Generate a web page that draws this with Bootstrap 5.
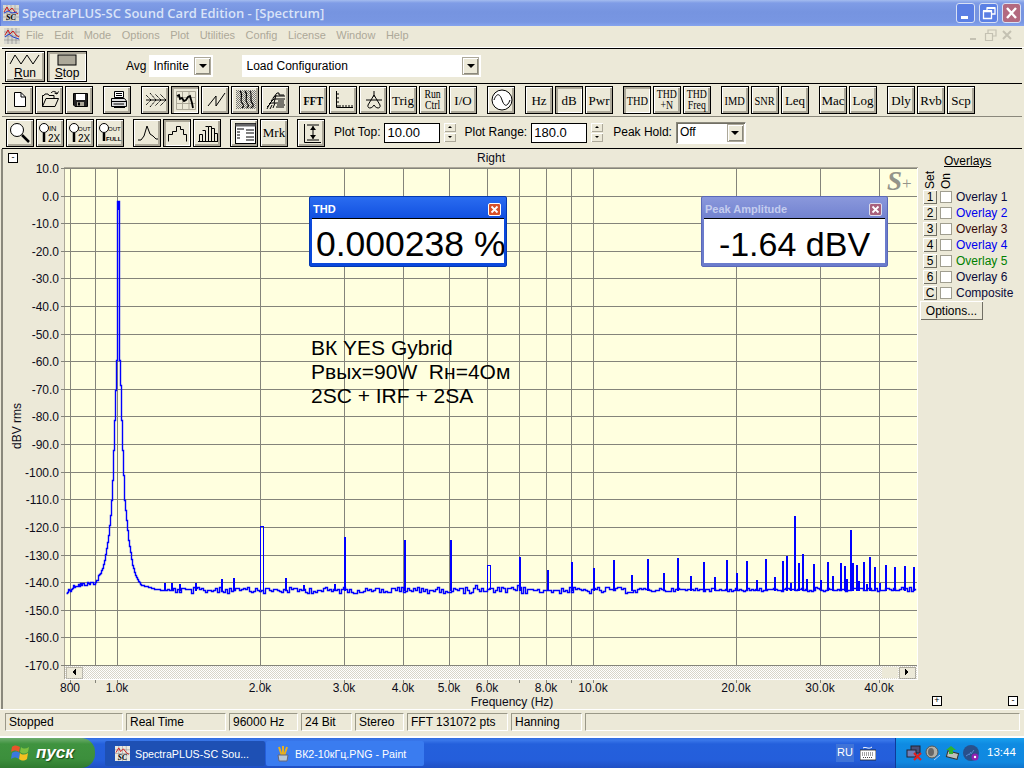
<!DOCTYPE html>
<html lang="en">
<head>
<meta charset="utf-8">
<title>SpectraPLUS-SC</title>
<link href="https://cdn.jsdelivr.net/npm/bootstrap@5.3.0/dist/css/bootstrap.min.css" rel="stylesheet">
<style>
html,body{margin:0;width:1024px;height:768px;overflow:hidden;background:#ece9d8}
body{font:12px/1.2 "Liberation Sans",Arial,sans-serif;color:#000}
.app-shell{width:1024px;height:768px}
.ti-bar{height:26px;padding:0 3px 0 2px;background:linear-gradient(#a4bcef 0,#7f9ce6 3px,#7694e0 12px,#7896e2 22px,#86a4ee 26px);color:#d9e3f8;border-left:1px solid #5f7cdc}
.ti-name{font:600 13px "Open Sans",sans-serif;margin-left:3px}
.ti-ctl{width:19px;height:20px;border-radius:3px;border:1px solid #d8e0f4;background:#5b7fe4}
.ti-close{background:#b3697f}
.ti-ctl svg,.mdi-ctl svg{display:block}
.menu-row{height:22px;padding:0 4px 2px;border-bottom:1px solid #fff}
.menu-row span.mi{color:#aca899;margin-right:10.500px;font-size:11px}
.menu-row span.first-mi{margin-left:2px}
.mdi-ctl{width:17px;height:17px}
.t-row{margin:0 2px;border-top:1px solid #000;background:#ece9d8}
.t-one{height:35px;padding-left:3px}
.t-two{height:33px;padding-left:3px;gap:10px}
.t-three{height:33px;padding-left:4px;border-bottom:1px solid #000;border-top-color:#8a887c}
.grp{display:flex;gap:2px}
.x-btn{width:28px;height:28px;padding:0;border:1px solid #000;border-radius:0;background:#ece9d8;box-shadow:inset 1px 1px 0 #fff,inset -2px -2px 0 #aca899;font:13px/11px "Liberation Serif",serif;color:#000;display:flex;align-items:center;justify-content:center;text-align:center;flex:none}
.x-btn.on{box-shadow:inset 2px 2px 0 #aca899,inset -1px -1px 0 #fff;background:#ece9d8}
.x-btn svg{display:block}
.big-btn{width:40px;height:31px;flex-direction:column;font:12px/12px "Liberation Sans",sans-serif;gap:1px}
.x-lbl{white-space:nowrap;display:inline-block}
.sq-lbl{transform:scaleX(.8)}
.two-lbl{font-size:11.500px;transform:scaleX(.85);line-height:11px}
.combo{height:22px;background:#fff;border:1px solid #fff;padding-left:3px}
.combo-btn{width:17px;height:18px;margin:1px;background:#ece9d8;border:1px solid #aca899;box-shadow:inset 1px 1px 0 #fff,inset -1px -1px 0 #8a887c;display:flex;align-items:center;justify-content:center}
.tri{width:0;height:0;border-left:4px solid transparent;border-right:4px solid transparent;border-top:4px solid #000}
.sunk{border:1px solid #8a887c;border-bottom-color:#fff;border-right-color:#fff;box-shadow:inset 1px 1px 0 #716f64;background:#fff}
.num-in{width:56px;height:20px;padding:0 2px;border:1px solid #000;border-radius:0;font:13px "Liberation Sans",sans-serif;background:#fff;color:#000}
.spin{width:12px;height:20px;flex:none}
.spin i{display:block;height:9px;margin-bottom:1px;background:#ece9d8;box-shadow:inset 1px 1px 0 #fff,inset -1px -1px 0 #aca899;position:relative}
.spin i::after{content:"";position:absolute;left:4px;top:3px;border-left:2px solid transparent;border-right:2px solid transparent}
.spin i.up::after{border-bottom:2px solid #000}
.spin i.dn::after{border-top:2px solid #000}
.main-area{height:560px}
.plot-wrap{width:918px;height:560px;flex:none}
.plot-wrap svg{display:block}
.ax{font:12px "Liberation Sans",sans-serif;fill:#0c0c18}
.note{font:21px "Liberation Sans",sans-serif;fill:#000}
.float-win{top:47px;height:71px;border-radius:2px}
.fw-a{left:309px;width:198px;background:linear-gradient(#2a6cf0,#0a48dc 40%,#0a48dc);border:1px solid #0438b0}
.fw-b{left:701px;width:187px;background:linear-gradient(#8a98dc,#6b7ccc 40%,#6b7ccc);border:1px solid #5a68b8}
.fw-head{height:21px;padding:3px 4px 0 3px;font:700 11px "Liberation Sans",sans-serif;color:#fff}
.fw-b .fw-head{color:#c4ccee}
.fw-x{width:13px;height:13px;border:1px solid #fff;border-radius:2px;background:#d85028;margin-right:1px}
.fw-b .fw-x{background:#a8607c;border-color:#dde}
.fw-body{margin:0 2px;height:45px;background:#fff;border-top:1px solid #000;color:#000;white-space:nowrap;overflow:hidden}
.fw-a .fw-body{padding-left:4px;font:35.500px/51px "Liberation Sans",sans-serif}
.fw-b .fw-body{text-align:center;font:34px/51px "Liberation Sans",sans-serif}
.side-panel{width:106px;height:560px}
.ov-title{margin:6px 0 0 26px;line-height:13px;height:13px;text-decoration:underline}
.rot-row{height:21px;padding-left:6px;gap:3px}
.rot{writing-mode:vertical-rl;transform:rotate(180deg);height:21px;line-height:13px;width:13px;text-align:left}
.ov-row{height:16px;padding-left:5px}
.ov-num{width:14px;height:14px;padding:0;border:0;border-radius:0;background:#ece9d8;box-shadow:inset 1px 1px 0 #fff,inset -1px -1px 0 #716f64;font:12px/13px "Liberation Sans",sans-serif;color:#000}
.ov-chk{width:12px;height:12px;margin:0 4px 0 3px;border-radius:0!important;border:1px solid #a09e90;background-color:#fff;box-shadow:none}
.c-blue{color:#0000f0}.c-green{color:#008000}.c-navy{color:#0a0a38}.c-maroon{color:#380808}
.opt-btn{width:63px;height:19px;margin:0 0 0 2px;padding:0;border:0;border-radius:0;background:#ece9d8;box-shadow:inset 1px 1px 0 #fff,inset -1px -1px 0 #716f64;font:12px/18px "Liberation Sans",sans-serif;color:#000}
.box-sq{width:10px;height:10px;border:1px solid #000;background:#fff;font:9px/7px "Liberation Sans",sans-serif;text-align:center;display:block;flex:none}
.side-foot{padding:0 6px 3px 14px}
.left-sq{left:8px;top:4px}
.stat-row{height:29px;border-top:1px solid #fff;border-bottom:2px solid #fff;padding:3px 4px 5px 5px;gap:3px}
.pane{height:18px;border-left:1px solid #9a9888;border-top:1px solid #9a9888;border-right:1px solid #fff;border-bottom:1px solid #fff;padding-left:3px;line-height:16px;white-space:nowrap;flex:none}
.task-row{height:30px;background:linear-gradient(#2f6be0 0,#3a78ea 2px,#2460dc 6px,#245edb 22px,#1f4fc4 30px);color:#fff}
.go-btn{width:95px;height:30px;border-radius:0 14px 14px 0;background:linear-gradient(#6fae6f,#3f933f 20%,#3c8f3c 70%,#2f7a2f);font:italic 700 17px "Liberation Sans",sans-serif;color:#fff;padding-left:11px;gap:6px;text-shadow:1px 1px 1px #1a4a1a}
.task-btn{height:25px;margin-top:3px;padding-left:10px;border-radius:2px;font:10.700px "Liberation Sans",sans-serif;gap:5px;white-space:nowrap;flex:none}
.tb-one{width:160px;margin-left:10px;background:#1e50b4}
.tb-two{width:158px;margin-left:1px;background:#3a7cf0}
.lang-box{background:#3f73d8;padding:2px 1px;margin-right:6px;font-size:11px}
.tray-box{width:129px;height:30px;background:linear-gradient(#18a0ee,#0f8be2 6px,#1088e0 24px,#0f74cc);border-left:1px solid #0e3a9a;padding-left:10px;margin-left:19px;gap:3px}
.clock{margin-left:5px;font-size:11.500px}
</style>
</head>
<body>
<div class="app-shell d-flex flex-column">

<div class="ti-bar d-flex align-items-center">
  <svg width="16" height="16" viewBox="0 0 16 16"><rect width="16" height="16" fill="#d8d8d0"/><path d="M0 4H16M0 8H16M0 12H16M4 0V16M8 0V16M12 0V16" stroke="#888" stroke-width=".5"/><path d="M1 7L4 2 6 6 9 3 12 7 15 9" stroke="#d01818" fill="none"/><path d="M1 8L5 6 9 8 14 7" stroke="#2040d0" fill="none"/><text x="3" y="15" font-family="Liberation Serif" font-size="8" font-weight="700" font-style="italic">SC</text></svg>
  <span class="ti-name">SpectraPLUS-SC Sound Card Edition - [Spectrum]</span>
  <div class="ms-auto d-flex gap-1">
    <div class="ti-ctl"><svg width="17" height="18"><rect x="4" y="12" width="7" height="3" fill="#fff"/></svg></div>
    <div class="ti-ctl"><svg width="17" height="18"><path d="M7 7V4H15V10H12M3.500 7.500H11.500V14.500H3.500Z" fill="none" stroke="#fff" stroke-width="1.300"/><path d="M3 7H12M7 4H15" stroke="#fff" stroke-width="2"/></svg></div>
    <div class="ti-ctl ti-close"><svg width="17" height="18"><path d="M4 4L13 14M13 4L4 14" stroke="#fff" stroke-width="2.400"/></svg></div>
  </div>
</div>

<div class="menu-row d-flex align-items-center">
  <svg class="me-1" width="16" height="16" viewBox="0 0 16 16"><rect width="16" height="16" fill="#d8d8d0"/><path d="M0 4H16M0 8H16M0 12H16M4 0V16M8 0V16M12 0V16" stroke="#777" stroke-width=".5"/><path d="M1 7L4 2 6 6 9 3 12 7 15 9" stroke="#d01818" fill="none"/><path d="M1 9L5 6 9 9 15 11" stroke="#2040d0" fill="none"/></svg>
  <span class="mi first-mi">File</span><span class="mi">Edit</span><span class="mi">Mode</span><span class="mi">Options</span><span class="mi">Plot</span><span class="mi">Utilities</span><span class="mi">Config</span><span class="mi">License</span><span class="mi">Window</span><span class="mi">Help</span>
  <div class="ms-auto d-flex me-1">
    <svg class="mdi-ctl" viewBox="0 0 17 17"><path d="M5 12H11" stroke="#c4c1b2" stroke-width="2"/></svg>
    <svg class="mdi-ctl" viewBox="0 0 17 17"><path d="M6 6V3H14V9H11M3.500 6.500H10.500V13.500H3.500Z" fill="none" stroke="#c4c1b2" stroke-width="1.200"/></svg>
    <svg class="mdi-ctl" viewBox="0 0 17 17"><path d="M4 4L12 12M12 4L4 12" stroke="#c4c1b2" stroke-width="2"/></svg>
  </div>
</div>

<div class="t-row t-one d-flex align-items-center">
  <button class="btn x-btn big-btn"><svg width="32" height="13" viewBox="0 0 32 13"><path d="M1 11L6 2 12 11 18 2 24 11 30 2" fill="none" stroke="#000"/></svg><span class="x-lbl"><u>R</u>un</span></button>
  <button class="btn x-btn big-btn on" style="margin-left:2px"><svg width="20" height="12" viewBox="0 0 20 12"><rect x="1" y="1" width="18" height="10" fill="#aca899" stroke="#000"/></svg><span class="x-lbl"><u>S</u>top</span></button>
  <span style="margin-left:39px">Avg</span>
  <div class="combo d-flex align-items-center" style="width:64px;margin-left:3px"><span class="flex-grow-1">Infinite</span><span class="combo-btn"><i class="tri"></i></span></div>
  <div class="combo d-flex align-items-center" style="width:239px;margin-left:29px"><span class="flex-grow-1">Load Configuration</span><span class="combo-btn"><i class="tri"></i></span></div>
</div>

<div class="t-row t-two d-flex align-items-center">
  <div class="grp">
    <button class="btn x-btn"><svg width="28" height="28"><path d="M8.500 6.500H15L19.500 11V20.500H8.500Z" fill="#fff" stroke="#000"/><path d="M15 6.500V11H19.500" fill="none" stroke="#000"/></svg></button>
    <button class="btn x-btn"><svg width="28" height="28"><path d="M6.500 20.500V9.500H8L9 8H12L13 9.500H18V12.500M6.500 20.500H19L22.500 12.500H10L6.500 20.500Z" fill="#ece9d8" stroke="#000"/><path d="M15 7C17 4.500 20 5 21 8M21 8L22.500 5.500M21 8L18.500 7" fill="none" stroke="#000"/></svg></button>
    <button class="btn x-btn"><svg width="28" height="28"><path d="M7.500 7.500H21.500V20.500H9L7.500 19Z" fill="#222" stroke="#000"/><rect x="10" y="8" width="9" height="6" fill="#fff"/><rect x="11" y="16" width="7" height="4" fill="#aca899"/><rect x="12" y="16.500" width="2" height="3" fill="#000"/></svg></button>
  </div>
  <div class="grp">
    <button class="btn x-btn"><svg width="28" height="28"><path d="M10.500 5.500H19.500V11.500H10.500Z" fill="#fff" stroke="#000"/><path d="M7.500 12.500H20.500L22.500 15V20.500H7.500Z" fill="#ddd" stroke="#000"/><path d="M7.500 15.500H22.500M9.500 18H20M10 21.500H21" stroke="#000"/><path d="M12 7.500H18M12 9.500H18" stroke="#000"/></svg></button>
  </div>
  <div class="grp">
    <button class="btn x-btn"><svg width="28" height="28"><path d="M4 14H24" stroke="#000"/><path d="M24 14L18 8M24 14L18 20M19 14L13 8M19 14L13 20M14 14L8 7M14 14L8 21M9 14L4 9M9 14L4 19" stroke="#000" fill="none" stroke-dasharray="1.400 .6"/></svg></button>
    <button class="btn x-btn on"><svg width="28" height="28"><path d="M4.500 5.500H23.500V23.500H4.500ZM4.500 11.500H23.500M4.500 17.500H23.500M10.500 5.500V23.500M17 5.500V23.500" fill="none" stroke="#aca899"/><path d="M5 10L7 9 8 13 10 12 12 15 14 14 16 11 18 10 20 17 21 22" fill="none" stroke="#000" stroke-width="1.800"/></svg></button>
    <button class="btn x-btn"><svg width="28" height="28"><path d="M6 20L14 10V20L23 7" fill="none" stroke="#000"/></svg></button>
    <button class="btn x-btn"><svg width="28" height="28"><defs><pattern id="dots" width="2" height="2" patternUnits="userSpaceOnUse"><rect width="1" height="1" fill="#777"/><rect x="1" y="1" width="1" height="1" fill="#777"/></pattern></defs><rect x="4" y="4" width="20" height="19" fill="url(#dots)"/><path d="M8 5C12 9 7 13 10 17S11 20 10 22M13 5C17 9 12 13 15 17S16 20 15 22M18 5C21 9 17 13 20 17S20 20 19 22" fill="none" stroke="#000" stroke-width="1.200"/></svg></button>
    <button class="btn x-btn"><svg width="28" height="28"><path d="M5 21L9 17H22M7 18L12 13H23M9 15L13 10H23M11 12L15 7H17V9H22" fill="none" stroke="#000"/><path d="M5 23L7 19M8 23L10 19M11 22L13 17M14 21H22M15 19H23M12 17L14 9M16 15H22" stroke="#000"/></svg></button>
  </div>
  <div class="grp">
    <button class="btn x-btn"><b class="x-lbl sq-lbl">FFT</b></button>
    <button class="btn x-btn"><svg width="28" height="28"><path d="M6.500 5V21.500H23M6.500 8H9M6.500 12H9M6.500 16H9M6.500 20H9M10 19V21M13 19V21M16 19V21M19 19V21M22 19V21" fill="none" stroke="#000"/></svg></button>
    <button class="btn x-btn"><svg width="28" height="28"><path d="M14 5V11M6 14H22M14 9L8 19C7 23 12 23 14 19 16 23 21 23 20 19L14 9" fill="none" stroke="#000"/></svg></button>
    <button class="btn x-btn"><span class="x-lbl">Trig</span></button>
    <button class="btn x-btn"><span class="x-lbl two-lbl">Run<br>Ctrl</span></button>
    <button class="btn x-btn"><span class="x-lbl">I/O</span></button>
  </div>
  <div class="grp">
    <button class="btn x-btn"><svg width="28" height="28"><circle cx="14" cy="14" r="10" fill="#fff" stroke="#000"/><path d="M6 14C9 6 12 8 14 14S19 22 22 14" fill="none" stroke="#000"/></svg></button>
  </div>
  <div class="grp">
    <button class="btn x-btn"><span class="x-lbl">Hz</span></button>
    <button class="btn x-btn on"><span class="x-lbl">dB</span></button>
    <button class="btn x-btn"><span class="x-lbl">Pwr</span></button>
  </div>
  <div class="grp">
    <button class="btn x-btn on"><span class="x-lbl sq-lbl">THD</span></button>
    <button class="btn x-btn"><span class="x-lbl two-lbl">THD<br>+N</span></button>
    <button class="btn x-btn"><span class="x-lbl two-lbl">THD<br>Freq</span></button>
  </div>
  <div class="grp">
    <button class="btn x-btn"><span class="x-lbl sq-lbl">IMD</span></button>
    <button class="btn x-btn"><span class="x-lbl sq-lbl">SNR</span></button>
    <button class="btn x-btn"><span class="x-lbl">Leq</span></button>
  </div>
  <div class="grp">
    <button class="btn x-btn"><span class="x-lbl">Mac</span></button>
    <button class="btn x-btn"><span class="x-lbl">Log</span></button>
  </div>
  <div class="grp">
    <button class="btn x-btn"><span class="x-lbl">Dly</span></button>
    <button class="btn x-btn"><span class="x-lbl">Rvb</span></button>
    <button class="btn x-btn"><span class="x-lbl">Scp</span></button>
  </div>
</div>

<div class="t-row t-three d-flex align-items-center">
  <div class="grp">
    <button class="btn x-btn"><svg width="26" height="26"><circle cx="10" cy="10" r="6.500" fill="#fff" stroke="#000"/><path d="M15 15L22 22" stroke="#000" stroke-width="2.500"/></svg></button>
    <button class="btn x-btn"><svg width="26" height="26"><circle cx="7" cy="8" r="4.500" fill="#fff" stroke="#000"/><path d="M7 13V22" stroke="#000" stroke-width="2.500"/><text x="12" y="11" font-family="Liberation Sans" font-size="7.500">IN</text><text x="11" y="22" font-family="Liberation Sans" font-size="10">2X</text></svg></button>
    <button class="btn x-btn"><svg width="26" height="26"><circle cx="7" cy="8" r="4.500" fill="#fff" stroke="#000"/><path d="M7 13V22" stroke="#000" stroke-width="2.500"/><text x="11" y="11" font-family="Liberation Sans" font-size="6">OUT</text><text x="11" y="22" font-family="Liberation Sans" font-size="10">2X</text></svg></button>
    <button class="btn x-btn"><svg width="26" height="26"><circle cx="7" cy="8" r="4.500" fill="#fff" stroke="#000"/><path d="M7 13V21" stroke="#000" stroke-width="2.500"/><text x="11" y="11" font-family="Liberation Sans" font-size="6">OUT</text><text x="9" y="21" font-family="Liberation Sans" font-size="6" font-weight="700">FULL</text></svg></button>
  </div>
  <div class="grp" style="margin-left:9px">
    <button class="btn x-btn"><svg width="28" height="28"><path d="M4 21H7L10 17 13 7 16 15 19 17 22 20H24" fill="none" stroke="#000"/></svg></button>
    <button class="btn x-btn on"><svg width="28" height="28"><path d="M4.500 22.500V15.500H8.500V12.500H12.500V7.500H16.500V10.500H19.500V15.500H22.500V22.500" fill="none" stroke="#000"/></svg></button>
    <button class="btn x-btn"><svg width="28" height="28"><path d="M5.500 22.500V15.500H8.500V22.500M8.500 11.500H11.500V22.500M11.500 7.500H14.500V22.500M14.500 7.500H17.500V22.500M17.500 9.500H20.500V22.500M20.500 14.500H23.500V22.500M4 22.500H24" fill="none" stroke="#000"/></svg></button>
  </div>
  <div class="grp" style="margin-left:9px">
    <button class="btn x-btn"><svg width="28" height="28"><rect x="4.500" y="4.500" width="20" height="20" fill="#fff" stroke="#000"/><rect x="4.500" y="4.500" width="20" height="3" fill="#666"/><path d="M6 10H13M6 13H9M6 19H9M15 11H23M15 14H23M15 18H23M15 21H23M6 16H9" stroke="#000"/></svg></button>
    <button class="btn x-btn"><span class="x-lbl">Mrk</span></button>
  </div>
  <div class="grp" style="margin-left:9px">
    <button class="btn x-btn"><svg width="28" height="28"><path d="M6.500 5V23.500H23M9 6H21M9 21H21M15 7V20" fill="none" stroke="#000"/><path d="M15 7L12 11H18ZM15 20L12 16H18Z" fill="#000"/></svg></button>
  </div>
  <span style="margin-left:9px">Plot Top:</span>
  <input class="form-control num-in ms-1" value="10.00">
  <div class="spin ms-1"><i class="up"></i><i class="dn"></i></div>
  <span style="margin-left:8px">Plot Range:</span>
  <input class="form-control num-in ms-1" value="180.0">
  <div class="spin ms-1"><i class="up"></i><i class="dn"></i></div>
  <span style="margin-left:10px">Peak Hold:</span>
  <div class="combo d-flex align-items-center ms-1 sunk" style="width:70px"><span class="flex-grow-1">Off</span><span class="combo-btn"><i class="tri"></i></span></div>
</div>

<div class="main-area d-flex">
  <div class="plot-wrap position-relative">
    <svg id="plot" width="918" height="560" viewBox="0 149 918 560" shape-rendering="crispEdges">
      <defs><pattern id="hatch" width="2" height="2" patternUnits="userSpaceOnUse"><rect width="2" height="2" fill="#fff"/><rect width="1" height="1" fill="#d8d5c8"/><rect x="1" y="1" width="1" height="1" fill="#d8d5c8"/></pattern></defs>
      <rect x="1" y="149" width="2" height="560" fill="#8a887c"/>
      <rect x="64" y="167" width="854" height="1" fill="#aca899"/>
      <rect x="64" y="167" width="1" height="512" fill="#aca899"/>
      <rect x="65" y="168" width="852" height="498" fill="#ffffdf"/>
      <g id="grid" stroke="#84847a" stroke-width="1"></g>
      <path id="trace" fill="none" stroke="#0000ff" stroke-width="1.400" shape-rendering="auto" transform="translate(.5 .5)"/>
      <path id="spikes" fill="none" stroke="#0000ff" stroke-width="2"/>
      <path d="M260.500 526H263.500V590M260.500 526V590M487.500 565H490.500V590M487.500 565V590" fill="none" stroke="#0000ff" stroke-width="1"/>
      <rect x="65" y="666" width="852" height="13" fill="url(#hatch)"/>
      <rect x="66" y="667" width="16" height="11" fill="#ece9d8" stroke="#8a887c" stroke-width=".5"/>
      <path d="M76 669V675L72 672Z" fill="#000"/>
      <rect x="882" y="667" width="16" height="11" fill="#ece9d8"/>
      <rect x="899" y="667" width="16" height="11" fill="#ece9d8" stroke="#716f64" stroke-width=".5"/>
      <path d="M905 669V675L909 672Z" fill="#000"/>
      <rect x="65" y="679" width="853" height="1" fill="#fff"/>
      <rect x="917" y="168" width="1" height="512" fill="#fff"/>
      <g id="labels" shape-rendering="auto"></g>
      <g shape-rendering="auto">
        <text class="ax" x="491" y="162" text-anchor="middle">Right</text>
        <text class="ax" x="512" y="706" text-anchor="middle">Frequency (Hz)</text>
        <text class="ax" transform="translate(21 426) rotate(-90)" text-anchor="middle">dBV rms</text>
        <text x="887" y="190" font-family="Liberation Serif" font-size="27" font-style="italic" font-weight="700" fill="#94948a">S</text>
        <text x="902" y="189" font-family="Liberation Serif" font-size="17" fill="#94948a">+</text>
        <text class="note" x="311" y="355">ВК YES Gybrid</text>
        <text class="note" x="311" y="379" xml:space="preserve">Рвых=90W  Rн=4Ом</text>
        <text class="note" x="311" y="403">2SC + IRF + 2SA</text>
      </g>
    </svg>
    <span class="box-sq left-sq position-absolute">-</span>
    <div class="float-win fw-a position-absolute">
      <div class="fw-head d-flex align-items-center justify-content-between"><span>THD</span><span class="fw-x d-flex"><svg width="11" height="11"><path d="M2.500 2.500L8.500 8.500M8.500 2.500L2.500 8.500" stroke="#fff" stroke-width="1.800"/></svg></span></div>
      <div class="fw-body">0.000238 %</div>
    </div>
    <div class="float-win fw-b position-absolute">
      <div class="fw-head d-flex align-items-center justify-content-between"><span>Peak Amplitude</span><span class="fw-x d-flex"><svg width="11" height="11"><path d="M2.500 2.500L8.500 8.500M8.500 2.500L2.500 8.500" stroke="#fff" stroke-width="1.800"/></svg></span></div>
      <div class="fw-body">-1.64 dBV</div>
    </div>
  </div>
  <div class="side-panel d-flex flex-column">
    <div class="ov-title">Overlays</div>
    <div class="rot-row d-flex"><span class="rot">Set</span><span class="rot">On</span></div>
    <div class="ov-row d-flex align-items-center"><button class="btn ov-num">1</button><input class="form-check-input ov-chk" type="checkbox"><span class="c-navy">Overlay 1</span></div>
    <div class="ov-row d-flex align-items-center"><button class="btn ov-num">2</button><input class="form-check-input ov-chk" type="checkbox"><span class="c-blue">Overlay 2</span></div>
    <div class="ov-row d-flex align-items-center"><button class="btn ov-num">3</button><input class="form-check-input ov-chk" type="checkbox"><span class="c-maroon">Overlay 3</span></div>
    <div class="ov-row d-flex align-items-center"><button class="btn ov-num">4</button><input class="form-check-input ov-chk" type="checkbox"><span class="c-blue">Overlay 4</span></div>
    <div class="ov-row d-flex align-items-center"><button class="btn ov-num">5</button><input class="form-check-input ov-chk" type="checkbox"><span class="c-green">Overlay 5</span></div>
    <div class="ov-row d-flex align-items-center"><button class="btn ov-num">6</button><input class="form-check-input ov-chk" type="checkbox"><span class="c-navy">Overlay 6</span></div>
    <div class="ov-row d-flex align-items-center"><button class="btn ov-num">C</button><input class="form-check-input ov-chk" type="checkbox"><span class="c-navy">Composite</span></div>
    <button class="btn opt-btn">Options...</button>
    <div class="side-foot mt-auto d-flex justify-content-between"><span class="box-sq">+</span><span class="box-sq">-</span></div>
  </div>
</div>

<div class="stat-row d-flex">
  <div class="pane" style="width:118px">Stopped</div>
  <div class="pane" style="width:100px">Real Time</div>
  <div class="pane" style="width:69px">96000 Hz</div>
  <div class="pane" style="width:51px">24 Bit</div>
  <div class="pane" style="width:49px">Stereo</div>
  <div class="pane" style="width:101px">FFT 131072 pts</div>
  <div class="pane" style="width:71px">Hanning</div>
  <div class="pane flex-grow-1"></div>
</div>

<div class="task-row d-flex align-items-start">
  <div class="go-btn d-flex align-items-center">
    <svg width="19" height="18" viewBox="0 0 19 18"><path d="M1 3C3 1 6 1 9 3L8 8C5 6 3 6 0 8Z" fill="#e8542a"/><path d="M10 3C12 5 15 5 18 3L17 8C14 10 12 10 9 8Z" fill="#7cc040"/><path d="M0 9C3 7 5 7 8 9L7 15C4 13 2 13-1 15Z" fill="#3a78e0" transform="translate(1 0)"/><path d="M9 9C11 11 14 11 17 9L16 15C13 17 11 17 8 15Z" fill="#f4c020"/></svg>
    <span>пуск</span>
  </div>
  <div class="task-btn tb-one d-flex align-items-center">
    <svg width="15" height="15" viewBox="0 0 16 16"><rect width="16" height="16" fill="#e8e8e0"/><path d="M0 4H16M0 8H16M4 0V16M8 0V16M12 0V16" stroke="#888" stroke-width=".5"/><path d="M1 7L4 2 6 6 9 3 12 7 15 9" stroke="#d01818" fill="none"/><text x="3" y="15" font-family="Liberation Serif" font-size="8" font-weight="700" font-style="italic">SC</text></svg>
    <span>SpectraPLUS-SC Sou...</span>
  </div>
  <div class="task-btn tb-two d-flex align-items-center">
    <svg width="14" height="16" viewBox="0 0 14 16"><path d="M3 1L6 10M7 0V10M11 1L8 10" stroke="#e8b020" stroke-width="2"/><path d="M2 9H12L11 15H3Z" fill="#b8c8d8" stroke="#667"/></svg>
    <span>ВК2-10кГц.PNG - Paint</span>
  </div>
  <div class="ms-auto d-flex align-items-center" style="height:30px">
    <span class="lang-box">RU</span>
    <svg width="16" height="16" viewBox="0 0 16 16"><path d="M3 3C6 1 8 5 12 2" fill="none" stroke="#fff"/><rect x="0" y="5" width="16" height="10" fill="#fff" stroke="#222" stroke-width=".8"/><path d="M2 8H14M2 10H14M3 12.500H13" stroke="#444" stroke-dasharray="1 1"/></svg>
    <div class="tray-box d-flex align-items-center">
      <svg width="16" height="16" viewBox="0 0 16 16"><rect x="5" y="1" width="9" height="7" fill="#485078" stroke="#223"/><rect x="1" y="5" width="9" height="7" fill="#7080b8" stroke="#223"/><path d="M8 8L15 15M15 8L8 15" stroke="#e02020" stroke-width="2.200"/></svg>
      <svg width="16" height="16" viewBox="0 0 16 16"><ellipse cx="7" cy="7" rx="6" ry="6" fill="#b0b0a8" stroke="#555"/><ellipse cx="6" cy="7" rx="3" ry="4" fill="#666"/><path d="M9 15L15 10" stroke="#b8c8f0"/></svg>
      <svg width="16" height="16" viewBox="0 0 16 16"><rect x="3" y="7" width="11" height="6" fill="#c0c0b8" stroke="#333" transform="rotate(15 8 10)"/><path d="M7 1L2 5H5V9H9V5H12Z" fill="#30b030"/></svg>
      <svg width="16" height="16" viewBox="0 0 16 16"><circle cx="8" cy="8" r="8" fill="#28508c"/><path d="M3 11L6 9M6 10L8 7M8 9L11 5" stroke="#5888d0"/><circle cx="12" cy="12" r="3.500" fill="#9020b0"/><circle cx="12" cy="12" r="1.200" fill="#fff"/></svg>
      <span class="clock">13:44</span>
    </div>
  </div>
</div>
</div>

<script src="https://cdn.jsdelivr.net/npm/bootstrap@5.3.0/dist/js/bootstrap.bundle.min.js"></script>
<script>
(function(){
  var NS='http://www.w3.org/2000/svg';
  function el(p,n,a,t){var e=document.createElementNS(NS,n);for(var k in a)e.setAttribute(k,a[k]);if(t)e.textContent=t;p.appendChild(e);return e;}
  function fx(f){return Math.floor(117+476*Math.log10(f/1000)+.001);}
  function dy(d){return Math.round(168+(10-d)*2.761);}
  var g=document.getElementById('grid'),L=document.getElementById('labels');
  for(var d=10;d>=-170;d-=10){
    var y=dy(d)+.5;
    el(g,'path',{d:'M61 '+y+'H917'});
    el(L,'text',{'class':'ax',x:59,y:dy(d)+5,'text-anchor':'end'},d.toFixed(1));
  }
  var xs=[800,900,1000,2000,3000,4000,5000,6000,7000,8000,9000,10000,20000,30000,40000];
  var names={800:'800',1000:'1.0k',2000:'2.0k',3000:'3.0k',4000:'4.0k',5000:'5.0k',6000:'6.0k',8000:'8.0k',10000:'10.0k',20000:'20.0k',30000:'30.0k',40000:'40.0k'};
  xs.forEach(function(f){
    var x=fx(f)+.5;
    el(g,'path',{d:'M'+x+' 168V666M'+x+' 679V683'});
    if(names[f])el(L,'text',{'class':'ax',x:fx(f),y:692,'text-anchor':'middle'},names[f]);
  });
  var seed=12345;function rnd(){seed=(seed*1103515245+12345)&2147483647;return seed/2147483647;}
  var skirt=[[66,593],[68,590],[75,585],[85,584],[95,582],[99,575],[102,568],[104,560],[106,548],[108,535],[110,515],[111,500],[112,480],[113,450],[114,420],[115,390],[116,360]];
  var right=[[119,360],[120,385],[121,420],[122,450],[123,475],[124,500],[126,520],[128,540],[130,552],[132,565],[135,575],[138,581],[141,585],[146,586],[155,589],[165,590]];
  function lerp(a,x){for(var i=0;i<a.length-1;i++){if(x>=a[i][0]&&x<=a[i+1][0]){return a[i][1]+(a[i+1][1]-a[i][1])*(x-a[i][0])/(a[i+1][0]-a[i][0]);}}return 590;}
  var p='M66 593';
  for(var x=67;x<=116;x++){var j=x<100?(rnd()*4-2):0;p+='H'+x+'V'+Math.round(lerp(skirt,x)+j);}
  p+='H117V201H119V360';
  for(x=120;x<=165;x++){p+='H'+x+'V'+Math.round(lerp(right,x));}
  for(x=167;x<=915;x+=2){
    var amp=x<640?6:3;var yy=Math.round(590+(rnd()-.5)*amp+(rnd()<.07?-3*rnd():0)+(x>640?-.5:0));
    p+='H'+x+'V'+yy;
  }
  document.getElementById('trace').setAttribute('d',p);
  var sp=[[222,579],[234,578],[286,578],[304,585],[335,584],[165,583],[172,583],[180,584],[196,583],[345,537],[405,540],[451,540],[520,557],[548,570],[572,562],[594,568],[614,560],[632,575],[648,559],[664,573],[678,558],[691,576],[704,562],[715,577],[727,560],[737,573],[747,561],[757,580],[766,559],[775,577],[783,561],[787,556],[791,583],[795,516],[799,563],[803,554],[807,579],[814,564],[821,580],[828,562],[833,576],[841,563],[845,566],[847,579],[851,530],[853,563],[857,565],[859,581],[864,562],[867,584],[870,557],[875,567],[880,583],[886,565],[895,567],[905,566],[914,567]];
  document.getElementById('spikes').setAttribute('d',sp.map(function(s){return 'M'+s[0]+' '+s[1]+'V591';}).join('')+'M118 201V210');
})();
</script>
</body>
</html>
